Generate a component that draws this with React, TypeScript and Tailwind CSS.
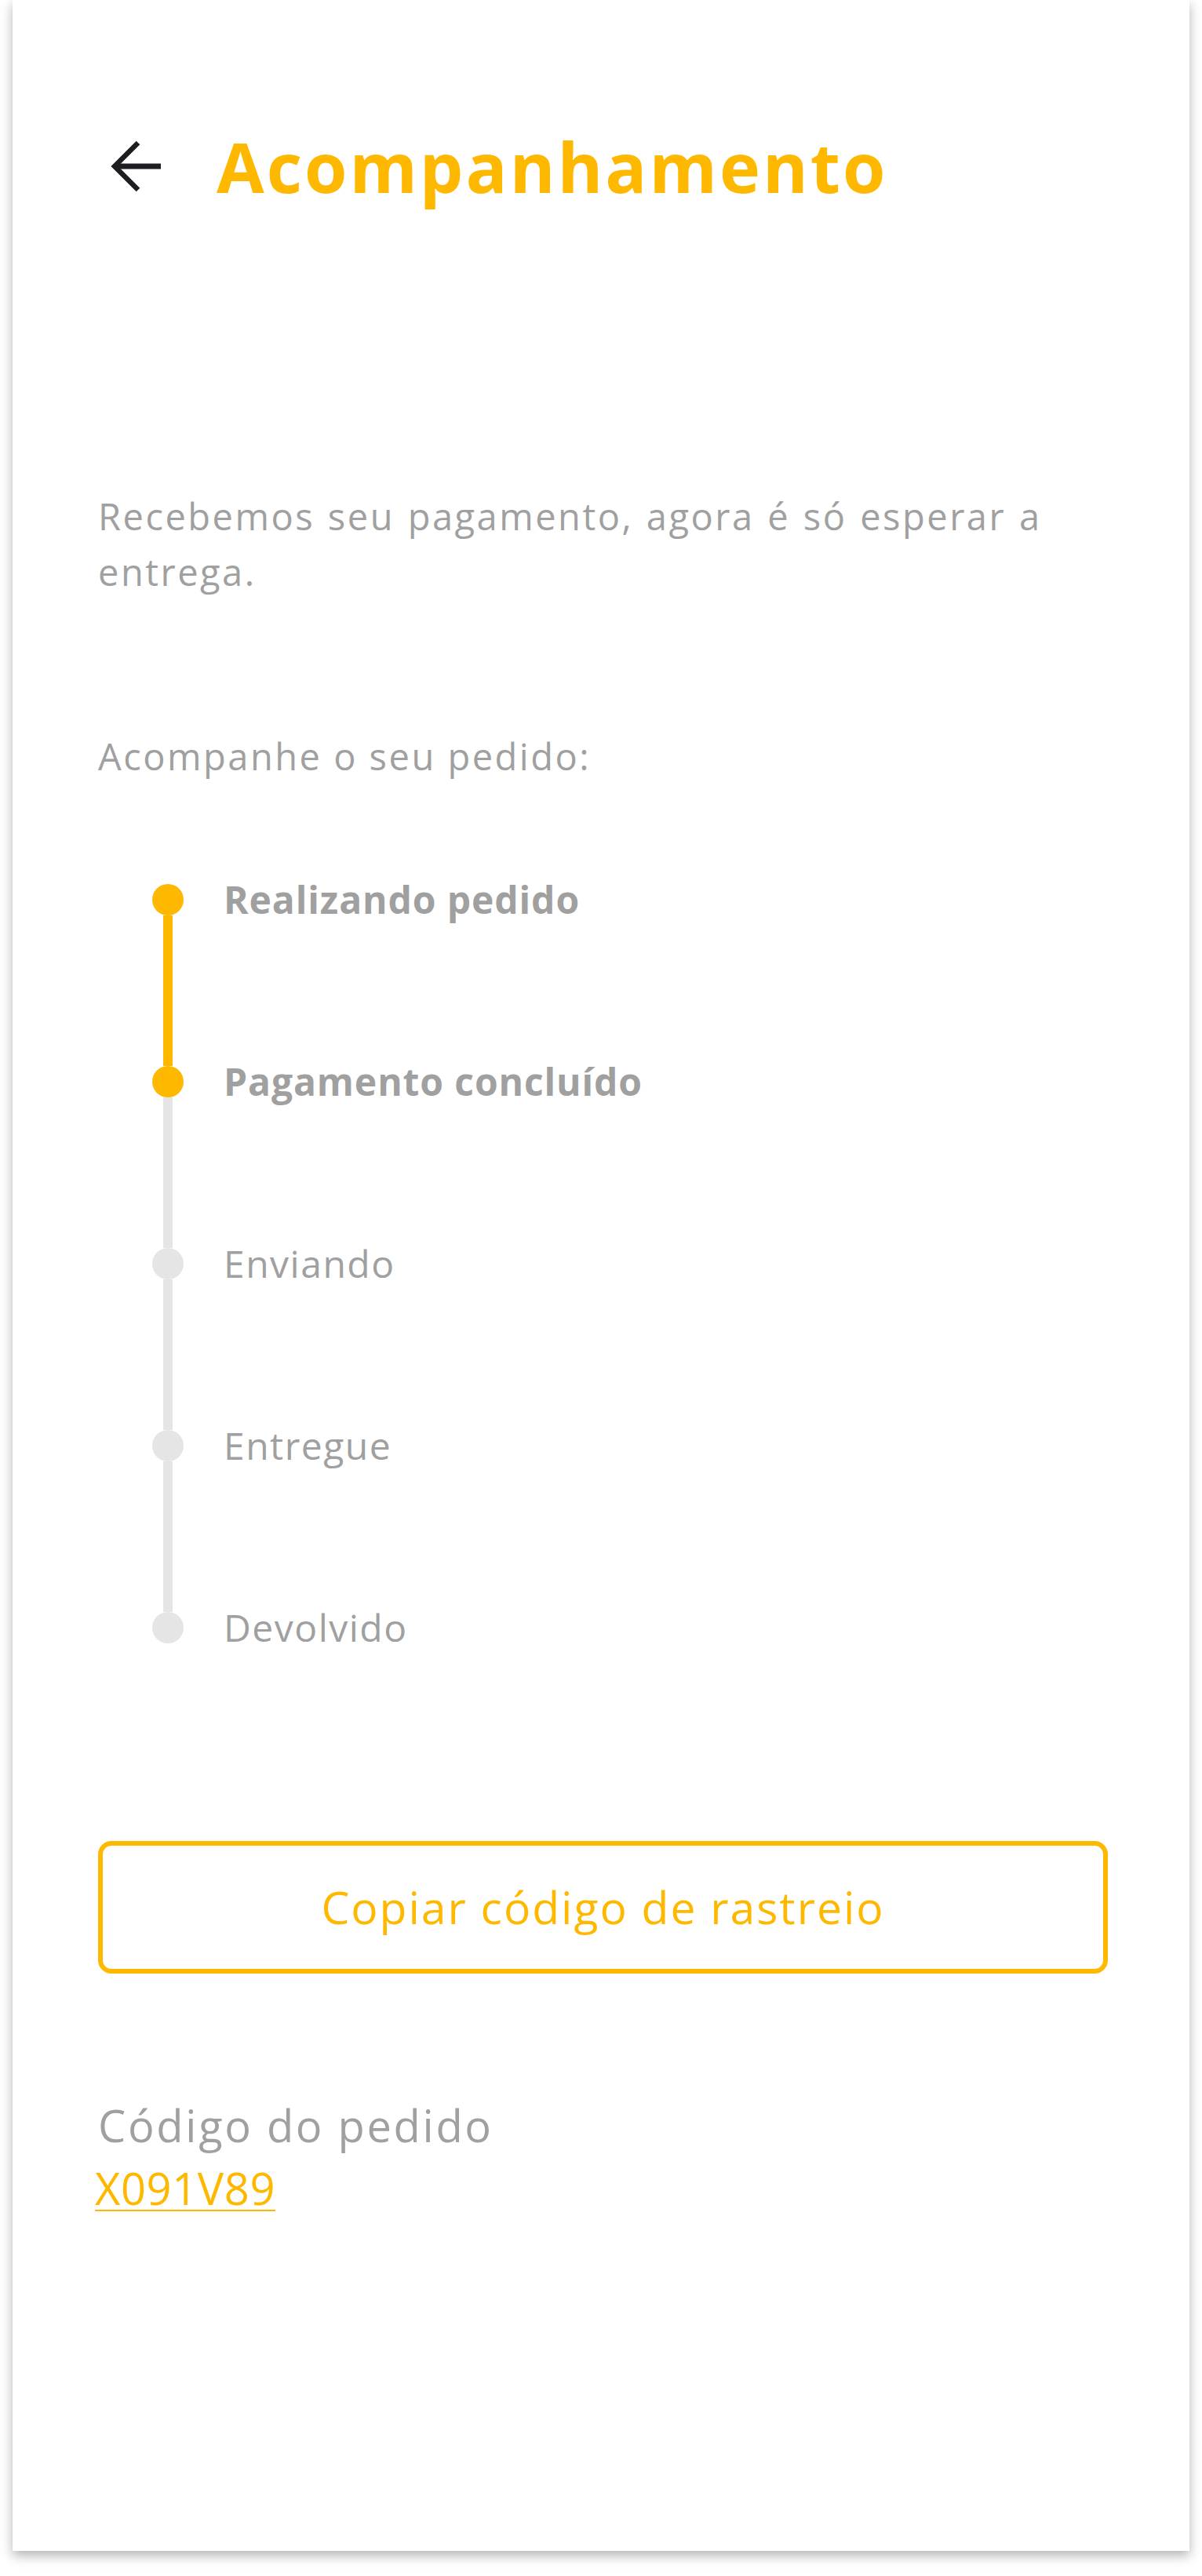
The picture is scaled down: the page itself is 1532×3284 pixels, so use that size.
import React from "react";

const steps = [
  { label: "Realizando pedido", done: true },
  { label: "Pagamento concluído", done: true },
  { label: "Enviando", done: false },
  { label: "Entregue", done: false },
  { label: "Devolvido", done: false },
];

function BackArrow() {
  return (
    <svg width="66" height="66" viewBox="0 0 66 66" fill="none" className="shrink-0">
      <path d="M65 33H6" stroke="#1e1d22" strokeWidth="7" />
      <path d="M36 3L6 33L36 63" stroke="#1e1d22" strokeWidth="6.5" />
    </svg>
  );
}

function Timeline() {
  return (
    <div className="flex flex-col pl-[69px]">
      {steps.map((s, i) => {
        const next = steps[i + 1];
        return (
          <div key={s.label} className="flex flex-col">
            <div className="flex items-center h-[40px]">
              <div
                className={
                  s.done
                    ? "w-[40px] h-[40px] rounded-full bg-[#ffb800] shrink-0"
                    : "w-[40px] h-[40px] rounded-full bg-[#e5e5e5] shrink-0"
                }
              />
              <span
                className={
                  s.done
                    ? "ml-[51px] text-[48px] leading-[60px] font-bold tracking-[0.9px] text-[#a0a0a0] whitespace-nowrap"
                    : "ml-[51px] text-[48px] leading-[60px] tracking-[1.5px] text-[#a0a0a0] whitespace-nowrap"
                }
              >
                {s.label}
              </span>
            </div>
            {next && (
              <div
                className={
                  next.done
                    ? "ml-[14px] w-[12px] h-[192px] bg-[#ffb800]"
                    : "ml-[14px] w-[12px] h-[192px] bg-[#e5e5e5]"
                }
              />
            )}
          </div>
        );
      })}
    </div>
  );
}

export default function App() {
  return (
    <div className="min-h-screen bg-white font-['Open_Sans',sans-serif]">
      <div className="ml-[16px] w-[1500px] h-[3252px] bg-white shadow-[0_6px_14px_rgba(0,0,0,0.3)] flex flex-col pl-[109px] pr-[104px]">
        <header className="flex items-center h-[100px] mt-[162px]">
          <div className="ml-[15px]">
            <BackArrow />
          </div>
          <h1 className="ml-[70px] text-[88px] leading-[100px] font-bold tracking-[3px] text-[#ffb800] whitespace-nowrap">
            Acompanhamento
          </h1>
        </header>

        <p className="mt-[361px] text-[47px] leading-[71px] tracking-[2.5px] [word-spacing:2px] text-[#a0a0a0]">
          Recebemos seu pagamento, agora é só esperar a entrega.
        </p>

        <p className="mt-[164px] text-[47px] leading-[71px] tracking-[2.5px] text-[#a0a0a0]">
          Acompanhe o seu pedido:
        </p>

        <section className="mt-[127px]">
          <Timeline />
        </section>

        <button className="mt-[252px] h-[169px] w-full rounded-[17px] border-[6px] border-[#ffb800] text-[57px] tracking-[2px] text-[#ffb800]">
          Copiar código de rastreio
        </button>

        <div className="mt-[153px] flex flex-col items-start">
          <span className="text-[56px] leading-[80px] tracking-[2.7px] text-[#a0a0a0]">Código do pedido</span>
          <a href="#" className="-ml-[4px] text-[56px] leading-[80px] tracking-[0.6px] text-[#ffb800] underline decoration-2 underline-offset-[6px]">
            X091V89
          </a>
        </div>
      </div>
    </div>
  );
}
